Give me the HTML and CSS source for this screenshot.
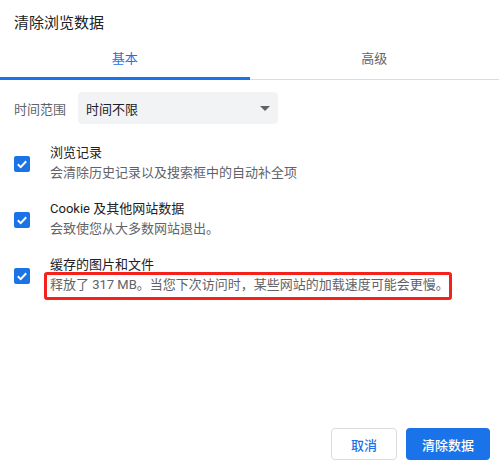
FILE: index.html
```html
<!DOCTYPE html>
<html lang="zh-CN">
<head>
<meta charset="utf-8">
<title>清除浏览数据</title>
<link rel="stylesheet" href="styles.css">
</head>
<body>
<div class="dialog">
  <div class="title">清除浏览数据</div>
  <div class="tabs">
    <div class="tab active">基本</div>
    <div class="tab">高级</div>
  </div>
  <div class="range">
    <span class="range-label">时间范围</span>
    <div class="select">
      <span>时间不限</span>
      <svg class="arrow" width="10" height="5" viewBox="0 0 10 5"><path d="M0 0h10L5 5z" fill="#5f6368"/></svg>
    </div>
  </div>
  <div class="items">
    <div class="item">
      <span class="cb"><svg width="16" height="16" viewBox="0 0 16 16"><path d="M3.8 8.3l2.9 2.8 5.5-5.9" fill="none" stroke="#fff" stroke-width="2"/></svg></span>
      <div class="item-text">
        <div class="item-title">浏览记录</div>
        <div class="item-sub">会清除历史记录以及搜索框中的自动补全项</div>
      </div>
    </div>
    <div class="item">
      <span class="cb"><svg width="16" height="16" viewBox="0 0 16 16"><path d="M3.8 8.3l2.9 2.8 5.5-5.9" fill="none" stroke="#fff" stroke-width="2"/></svg></span>
      <div class="item-text">
        <div class="item-title">Cookie 及其他网站数据</div>
        <div class="item-sub">会致使您从大多数网站退出。</div>
      </div>
    </div>
    <div class="item">
      <span class="cb"><svg width="16" height="16" viewBox="0 0 16 16"><path d="M3.8 8.3l2.9 2.8 5.5-5.9" fill="none" stroke="#fff" stroke-width="2"/></svg></span>
      <div class="item-text">
        <div class="item-title">缓存的图片和文件</div>
        <div class="item-sub"><span class="mark">释放了 317 MB。当您下次访问时，某些网站的加载速度可能会更慢。</span></div>
      </div>
    </div>
  </div>
  <div class="footer">
    <button class="btn cancel">取消</button>
    <button class="btn primary">清除数据</button>
  </div>
</div>
</body>
</html>
```
FILE: styles.css
```css
html, body {
  margin: 0;
  padding: 0;
  background: #fff;
}
body {
  font-family: Roboto, "Noto Sans CJK SC", sans-serif;
  font-size: 13px;
  color: #202124;
}
.dialog {
  width: 499px;
  height: 470px;
  display: flex;
  flex-direction: column;
  box-sizing: border-box;
}
.title {
  padding: 13px 14px 0;
  font-size: 15px;
  line-height: 20px;
  height: 20px;
}
.tabs {
  display: flex;
  border-bottom: 1px solid #dadce0;
}
.tab {
  flex: 1;
  height: 47px;
  box-sizing: border-box;
  display: flex;
  align-items: flex-end;
  justify-content: center;
  padding-bottom: 8px;
  line-height: 20px;
  border-bottom: 3px solid transparent;
  margin-bottom: -1px;
  color: #5f6368;
}
.tab.active {
  color: #1a73e8;
  border-bottom-color: #1a73e8;
}
.range {
  display: flex;
  align-items: center;
  gap: 12px;
  padding-left: 14px;
  margin-top: 12px;
}
.range-label {
  color: #5f6368;
}
.select {
  width: 200px;
  height: 32px;
  box-sizing: border-box;
  background: #f1f3f4;
  border-radius: 4px;
  display: flex;
  align-items: center;
  justify-content: space-between;
  padding: 0 8px;
  color: #202124;
}
.arrow {
  display: block;
}
.items {
  display: flex;
  flex-direction: column;
  gap: 16px;
  margin-top: 19px;
  padding-left: 14px;
}
.item {
  display: flex;
  align-items: center;
  gap: 20px;
}
.cb {
  width: 16px;
  height: 16px;
  border-radius: 2px;
  background: #1a73e8;
  display: block;
  margin-top: 2px;
}
.cb svg {
  display: block;
}
.item-title, .item-sub {
  line-height: 20px;
}
.item-sub {
  color: #5f6368;
}
.mark {
  position: relative;
  display: inline-block;
}
.mark::after {
  content: "";
  position: absolute;
  top: -3px;
  bottom: -5px;
  left: -6px;
  right: -3px;
  border: 3px solid #f5211b;
  border-radius: 3px;
}
.footer {
  margin-top: auto;
  display: flex;
  justify-content: flex-end;
  gap: 9px;
  padding: 0 9px 10px 0;
}
.btn {
  font-family: Roboto, "Noto Sans CJK SC", sans-serif;
  font-size: 13px;
  font-weight: 500;
  height: 32px;
  border-radius: 4px;
  margin: 0;
  cursor: pointer;
}
.cancel {
  background: #fff;
  color: #1a73e8;
  border: 1px solid #dadce0;
  padding: 0 19px;
}
.primary {
  background: #1a73e8;
  color: #fff;
  border: none;
  padding: 0 16px;
}
```
